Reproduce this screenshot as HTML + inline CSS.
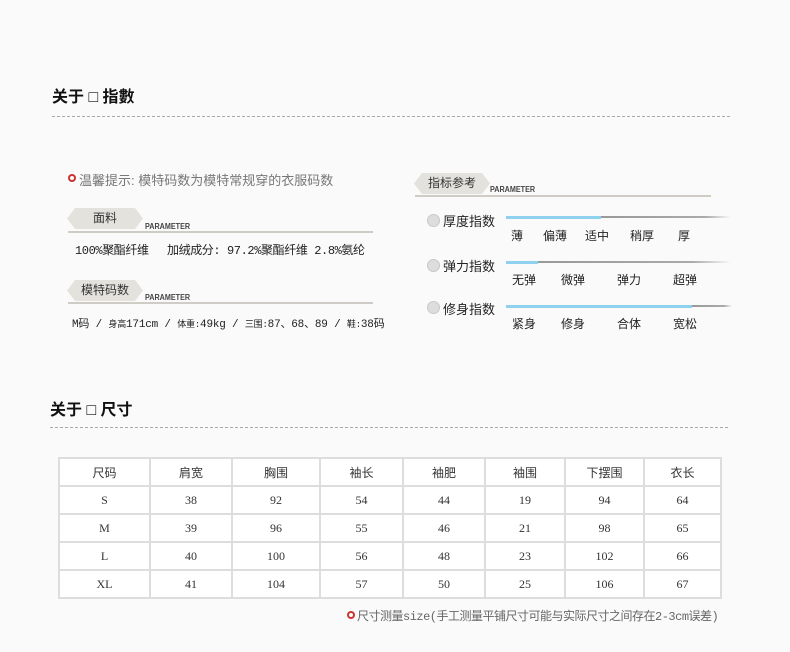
<!DOCTYPE html>
<html><head><meta charset="utf-8"><style>
*{margin:0;padding:0;box-sizing:border-box}
body{width:790px;height:652px;background:#fafafa;position:relative;font-family:"Liberation Sans","Noto Sans CJK SC",sans-serif;color:#222;overflow:hidden}
.a{position:absolute;white-space:nowrap}
.h{font-size:16px;font-weight:bold;color:#111}
.dash{position:absolute;height:0;border-top:1px dashed #aaa}
.tab{position:absolute;height:21px;background:#e4e2dc;clip-path:polygon(8px 0,calc(100% - 8px) 0,100% 50%,calc(100% - 8px) 100%,8px 100%,0 50%);font-size:12px;color:#333;text-align:center;line-height:21px}
.par{position:absolute;font-size:8px;font-weight:bold;color:#444;transform:scaleX(.9);transform-origin:left}
.line{position:absolute;height:2px;background:#cfccc6}
.dot{position:absolute;width:8px;height:8px;border:2px solid #c33;border-radius:50%}
.bul{position:absolute;width:13px;height:13px;border-radius:50%;background:#ddd;border:1px solid #c8c8c8}
.bar{position:absolute;height:3px;background:#8fd2f0}
.gb{position:absolute;height:2px;background:linear-gradient(90deg,#999,#aaa 80%,rgba(200,200,200,0))}
.s{font-size:12px;color:#222}
table{position:absolute;left:58px;top:457px;border-collapse:collapse;background:#fff}
td{border:2px solid #ddd;text-align:center;font-size:12px;color:#333;height:28px;font-family:"Liberation Serif","Noto Sans CJK SC",serif}
</style></head><body>
<div class="a h" style="left:52px;top:83px">关于 □ 指數</div>
<div class="dash" style="left:52px;top:116px;width:678px"></div>

<div class="dot" style="left:68px;top:174px"></div>
<div class="a" style="left:79px;top:170px;font-size:13px;color:#777">温馨提示: 模特码数为模特常规穿的衣服码数</div>

<div class="tab" style="left:67px;top:208px;width:76px">面料</div>
<div class="par" style="left:145px;top:222px">PARAMETER</div>
<div class="line" style="left:68px;top:231px;width:305px"></div>
<div class="a" style="left:75px;top:241px;font-size:12px;letter-spacing:-0.4px;font-family:'Liberation Mono','Noto Sans CJK SC',monospace">100%聚酯纤维　 加绒成分: 97.2%聚酯纤维 2.8%氨纶</div>

<div class="tab" style="left:67px;top:280px;width:76px">模特码数</div>
<div class="par" style="left:145px;top:293px">PARAMETER</div>
<div class="line" style="left:68px;top:302px;width:305px"></div>
<div class="a" style="left:72px;top:315px;font-size:11px;letter-spacing:-0.2px;font-family:'Liberation Mono','Noto Sans CJK SC',monospace">M码 / <span style="font-size:9px">身高</span>171cm / <span style="font-size:9px">体重:</span>49kg / <span style="font-size:9px">三围:</span>87、68、89 / <span style="font-size:9px">鞋:</span>38码</div>

<div class="tab" style="left:414px;top:173px;width:76px">指标参考</div>
<div class="par" style="left:490px;top:185px">PARAMETER</div>
<div class="line" style="left:415px;top:195px;width:296px"></div>

<div class="bul" style="left:427px;top:214px"></div>
<div class="a" style="left:443px;top:211px;font-size:13px">厚度指数</div>
<div class="bar" style="left:506px;top:216px;width:95px"></div>
<div class="gb" style="left:601px;top:216px;width:130px"></div>
<div class="a s" style="left:511px;top:227px">薄</div>
<div class="a s" style="left:543px;top:227px">偏薄</div>
<div class="a s" style="left:585px;top:227px">适中</div>
<div class="a s" style="left:630px;top:227px">稍厚</div>
<div class="a s" style="left:678px;top:227px">厚</div>

<div class="bul" style="left:427px;top:259px"></div>
<div class="a" style="left:443px;top:256px;font-size:13px">弹力指数</div>
<div class="bar" style="left:506px;top:261px;width:32px"></div>
<div class="gb" style="left:538px;top:261px;width:193px"></div>
<div class="a s" style="left:512px;top:271px">无弹</div>
<div class="a s" style="left:561px;top:271px">微弹</div>
<div class="a s" style="left:617px;top:271px">弹力</div>
<div class="a s" style="left:673px;top:271px">超弹</div>

<div class="bul" style="left:427px;top:301px"></div>
<div class="a" style="left:443px;top:299px;font-size:13px">修身指数</div>
<div class="bar" style="left:506px;top:305px;width:186px"></div>
<div class="gb" style="left:692px;top:305px;width:40px"></div>
<div class="a s" style="left:512px;top:315px">紧身</div>
<div class="a s" style="left:561px;top:315px">修身</div>
<div class="a s" style="left:617px;top:315px">合体</div>
<div class="a s" style="left:673px;top:315px">宽松</div>

<div class="a h" style="left:50px;top:396px">关于 □ 尺寸</div>
<div class="dash" style="left:50px;top:427px;width:678px"></div>

<table>
<tr><td style="width:91px">尺码</td><td style="width:82px">肩宽</td><td style="width:88px">胸围</td><td style="width:83px">袖长</td><td style="width:82px">袖肥</td><td style="width:80px">袖围</td><td style="width:79px">下摆围</td><td style="width:77px">衣长</td></tr>
<tr><td>S</td><td>38</td><td>92</td><td>54</td><td>44</td><td>19</td><td>94</td><td>64</td></tr>
<tr><td>M</td><td>39</td><td>96</td><td>55</td><td>46</td><td>21</td><td>98</td><td>65</td></tr>
<tr><td>L</td><td>40</td><td>100</td><td>56</td><td>48</td><td>23</td><td>102</td><td>66</td></tr>
<tr><td>XL</td><td>41</td><td>104</td><td>57</td><td>50</td><td>25</td><td>106</td><td>67</td></tr>
</table>

<div class="dot" style="left:347px;top:611px"></div>
<div class="a" style="left:357px;top:607px;font-size:12px;letter-spacing:-0.5px;color:#666;font-family:'Liberation Mono','Noto Sans CJK SC',monospace">尺寸测量size(手工测量平铺尺寸可能与实际尺寸之间存在2-3cm误差)</div>
</body></html>
